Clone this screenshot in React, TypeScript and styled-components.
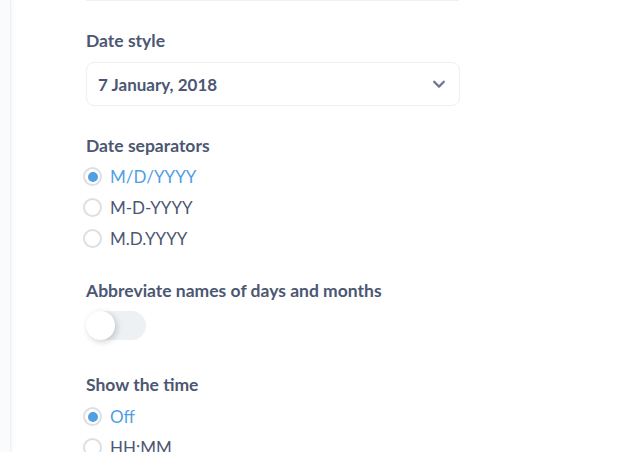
import { FC, useState } from 'react'
import styled, { createGlobalStyle } from 'styled-components'

const GlobalStyle = createGlobalStyle`
  html, body {
    margin: 0;
    padding: 0;
    background: #ffffff;
    font-family: Lato, 'Noto Sans', sans-serif;
    color: #4c5773;
  }
  * {
    box-sizing: border-box;
  }
`

type RadioOption = { value: string; label: string }

const separatorOptions: RadioOption[] = [
  { value: '/', label: 'M/D/YYYY' },
  { value: '-', label: 'M-D-YYYY' },
  { value: '.', label: 'M.D.YYYY' }
]

const timeOptions: RadioOption[] = [
  { value: 'off', label: 'Off' },
  { value: 'hh:mm', label: 'HH:MM' }
]

const ChevronDown: FC = () => (
  <svg width="14" height="14" viewBox="0 0 16 16" fill="none">
    <path d="M2.5 5.5 L8 11 L13.5 5.5" stroke="#6e7694" strokeWidth="2.6" strokeLinecap="round" strokeLinejoin="round" />
  </svg>
)

const RadioGroup: FC<{ options: RadioOption[]; value: string; onChange: (v: string) => void }> = ({
  options,
  value,
  onChange
}) => (
  <RadioList>
    {options.map((option) => (
      <RadioRow key={option.value} onClick={() => onChange(option.value)}>
        <RadioCircle checked={option.value === value} />
        <RadioLabel checked={option.value === value}>{option.label}</RadioLabel>
      </RadioRow>
    ))}
  </RadioList>
)

const App: FC = () => {
  const [separator, setSeparator] = useState('/')
  const [abbreviate, setAbbreviate] = useState(false)
  const [time, setTime] = useState('off')

  return (
    <Page>
      <GlobalStyle />
      <SideStrip />
      <Content>
        <PrevFieldEdge />
        <Section $gap={30}>
          <FieldLabel $space={11}>Date style</FieldLabel>
          <SelectBox>
            <span>7 January, 2018</span>
            <ChevronDown />
          </SelectBox>
        </Section>

        <Section $gap={27}>
          <FieldLabel $space={5}>Date separators</FieldLabel>
          <RadioGroup options={separatorOptions} value={separator} onChange={setSeparator} />
        </Section>

        <Section $gap={35}>
          <FieldLabel $space={10}>Abbreviate names of days and months</FieldLabel>
          <Toggle $on={abbreviate} onClick={() => setAbbreviate(!abbreviate)}>
            <Knob $on={abbreviate} />
          </Toggle>
        </Section>

        <Section $gap={30}>
          <FieldLabel $space={6}>Show the time</FieldLabel>
          <RadioGroup options={timeOptions} value={time} onChange={setTime} />
        </Section>
      </Content>
    </Page>
  )
}

const Page = styled.div`
  display: flex;
  flex-direction: row;
  width: 100%;
  height: 100vh;
  overflow: hidden;
`

const SideStrip = styled.div`
  flex: 0 0 11px;
  background: #f9fbfc;
  border-right: 1px solid #eef0f3;
  box-shadow: 1px 0 3px rgba(0, 0, 0, 0.05);
`

const Content = styled.div`
  flex: 1;
  display: flex;
  flex-direction: column;
  padding-left: 75px;
`

const PrevFieldEdge = styled.div`
  width: 373px;
  height: 2px;
  margin-bottom: 30px;
  border: 1px solid #eeeff1;
  border-top: none;
  border-radius: 0 0 8px 8px;
`

const Section = styled.div<{ $gap: number }>`
  display: flex;
  flex-direction: column;
  align-items: flex-start;
  margin-bottom: ${(p) => p.$gap}px;
`

const FieldLabel = styled.div<{ $space: number }>`
  font-size: 17.5px;
  font-weight: 700;
  line-height: 20px;
  color: #4c5773;
  margin-bottom: ${(p) => p.$space}px;
`

const SelectBox = styled.div`
  display: flex;
  flex-direction: row;
  align-items: center;
  justify-content: space-between;
  width: 374px;
  height: 44px;
  padding: 0 13px 0 11px;
  border: 1px solid #eeeff1;
  border-radius: 8px;
  font-size: 17px;
  font-weight: 700;
  color: #4c5773;
  cursor: pointer;
`

const RadioList = styled.div`
  display: flex;
  flex-direction: column;
`

const RadioRow = styled.div`
  display: flex;
  flex-direction: row;
  align-items: center;
  height: 31px;
  cursor: pointer;
`

const RadioCircle = styled.span<{ checked: boolean }>`
  position: relative;
  width: 19px;
  height: 19px;
  margin-left: -3px;
  margin-right: 8px;
  border-radius: 50%;
  border: 2px solid #dcdfe3;
  background: #ffffff;
  &::after {
    content: '';
    position: absolute;
    left: 2.5px;
    top: 2.5px;
    width: 10px;
    height: 10px;
    border-radius: 50%;
    background: #509ee3;
    display: ${(p) => (p.checked ? 'block' : 'none')};
  }
`

const RadioLabel = styled.span<{ checked: boolean }>`
  font-size: 17px;
  line-height: 20px;
  color: ${(p) => (p.checked ? '#509ee3' : '#4c5773')};
`

const Toggle = styled.div<{ $on: boolean }>`
  position: relative;
  width: 60px;
  height: 29px;
  border-radius: 15px;
  background: ${(p) => (p.$on ? '#509ee3' : '#edf1f4')};
  cursor: pointer;
`

const Knob = styled.span<{ $on: boolean }>`
  position: absolute;
  top: 0;
  left: ${(p) => (p.$on ? '31px' : '0')};
  width: 29px;
  height: 29px;
  border-radius: 50%;
  background: #ffffff;
  box-shadow: 2px 2px 6px rgba(0, 0, 0, 0.18);
`

export default App
